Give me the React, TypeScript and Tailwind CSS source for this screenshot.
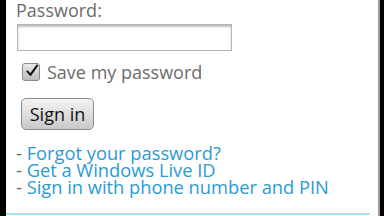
export default function App() {
  return (
    <div className="flex h-[216px] w-[384px] overflow-hidden bg-black">
      <div className="relative ml-[6px] h-full w-[372px] overflow-hidden bg-white font-['Open_Sans',sans-serif]">
        <div className="flex flex-col pl-[10px]">
          <div className="-mt-[2px] text-[18px] leading-[24px] text-[#6b6b6b]">Password:</div>
          <div className="ml-[1px] mt-[2px] h-[27px] w-[215px] border border-[#b5b5b5] bg-white shadow-[inset_0_2px_2px_rgba(0,0,0,0.25)]" />
          <label className="ml-[6px] mt-[11px] flex items-center gap-[7px]">
            <span className="flex h-[18px] w-[18px] items-center justify-center rounded-[3px] border border-[#8a8a8a] bg-gradient-to-b from-[#e8e8e8] to-[#bdbdbd]">
              <svg width="18" height="18" viewBox="0 0 18 18" className="-mt-[3px] ml-[2px]">
                <path d="M3 9.5 L7 14 L15.5 2" fill="none" stroke="#111" strokeWidth="2.6" strokeLinecap="round" strokeLinejoin="round" />
              </svg>
            </span>
            <span className="text-[18px] leading-[20px] text-[#6b6b6b]">Save my password</span>
          </label>
          <button className="ml-[5px] mt-[16px] flex h-[32px] w-[73px] items-center justify-center rounded-[5px] border border-[#8c8c8c] bg-gradient-to-b from-[#f4f4f4] to-[#c9c9c9] text-[18px] text-[#111]">
            Sign in
          </button>
          <div className="mt-[14px] flex flex-col text-[18.3px] leading-[17px] text-[#2b9bd3]">
            <div><span className="text-[#666]">- </span>Forgot your password?</div>
            <div><span className="text-[#666]">- </span>Get a Windows Live ID</div>
            <div><span className="text-[#666]">- </span>Sign in with phone number and PIN</div>
          </div>
        </div>
        <div className="absolute bottom-[1px] left-0 h-[2px] w-[364px] bg-[#a6e3f2]" />
      </div>
      <div className="h-full w-[2px] bg-[#9a9a9a]" />
    </div>
  );
}
